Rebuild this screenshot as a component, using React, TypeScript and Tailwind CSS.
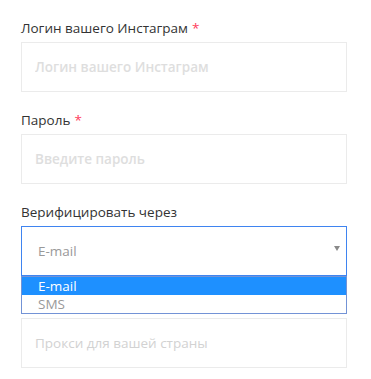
import React from 'react';

const font = { fontFamily: '"Open Sans", "Noto Sans", sans-serif' };

function Label({ text, required }: { text?: string; required?: boolean }) {
    return (
        <div className="h-5 leading-5 mb-1 text-[13.5px] text-[#333]">
            {text}
            {required && <span className="text-[#ff3b5c] ml-1">*</span>}
        </div>
    );
}

function Input({ placeholder, light }: { placeholder: string; light?: boolean }) {
    return (
        <input
            placeholder={placeholder}
            className={
                light
                    ? "block w-full h-[50px] border border-[#ebebeb] px-[13px] text-[13.5px] text-[#333] placeholder:text-[#d2d2d2] outline-none bg-white"
                    : "block w-full h-[50px] border border-[#ebebeb] px-[13px] text-[13.5px] font-semibold text-[#333] placeholder:text-[#dedede] outline-none bg-white"
            }
        />
    );
}

export default function App() {
    return (
        <div className="w-[371px] h-[379px] overflow-hidden bg-white" style={font}>
            <div className="pt-[18px] pl-[21px] w-[347px] flex flex-col gap-[18px]">
                <div>
                    <Label text="Логин вашего Инстаграм" required />
                    <Input placeholder="Логин вашего Инстаграм" />
                </div>
                <div>
                    <Label text="Пароль" required />
                    <Input placeholder="Введите пароль" />
                </div>
                <div className="relative z-10">
                    <Label text="Верифицировать через" />
                    <div className="relative h-[50px] border border-[#3f84f0] flex items-center px-[16px] text-[13.5px] text-[#999]">
                        E-mail
                        <span className="absolute right-[6px] top-[19px] w-0 h-0 border-l-[3px] border-r-[3px] border-t-[5px] border-l-transparent border-r-transparent border-t-[#8a8a8a]" />
                    </div>
                    {/* open options list */}
                    <div className="absolute left-0 right-0 top-[74px] bg-white border border-[#7393d6] text-[13.5px] leading-[18px]">
                        <div className="bg-[#1e90ff] text-white pl-[16px] h-[18px]">E-mail</div>
                        <div className="text-[#999] pl-[16px] h-[18px]">SMS</div>
                    </div>
                </div>
                <div>
                    {/* label hidden under the open list */}
                    <Label />
                    <Input placeholder="Прокси для вашей страны" light />
                </div>
            </div>
        </div>
    );
}
